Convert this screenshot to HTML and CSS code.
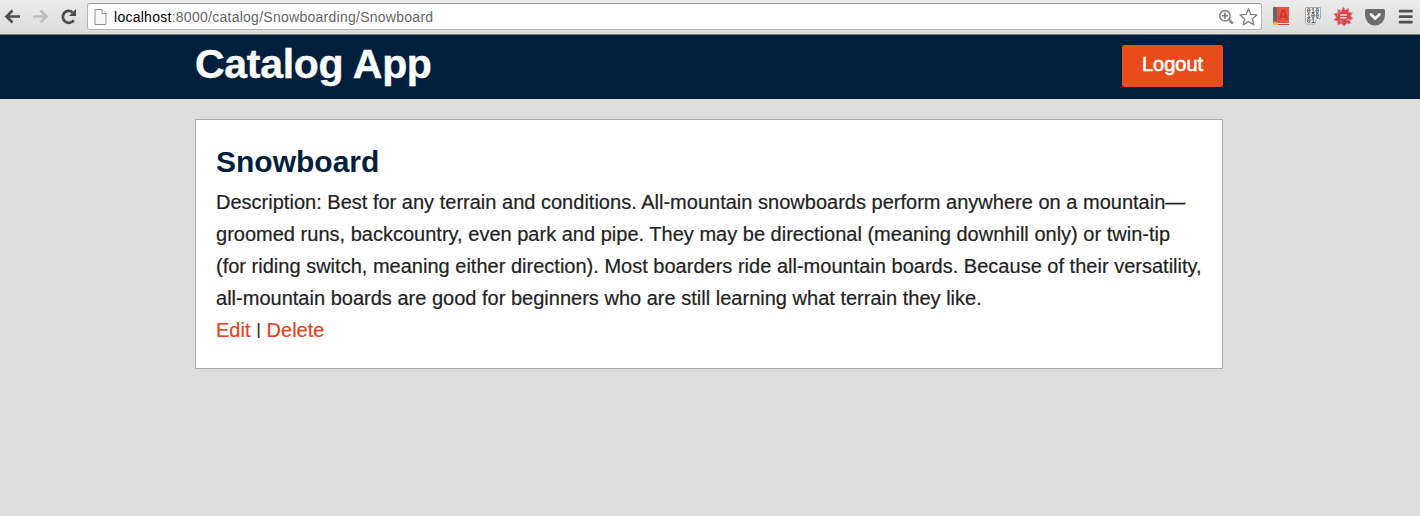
FILE: index.html
```html
<!DOCTYPE html>
<html lang="en">
<head>
<meta charset="utf-8">
<title>Catalog App</title>
<link rel="stylesheet" href="styles.css">
</head>
<body>
<div class="toolbar">
  <svg class="nav-icons" width="87" height="34" viewBox="0 0 87 34" fill="none">
    <path d="M20 16.500H7M12.500 10.500l-6 6 6 6" stroke="#4d4d4d" stroke-width="2.600"/>
    <path d="M33 16.500h13M40.500 10.500l6 6-6 6" stroke="#bdbdbd" stroke-width="2.600"/>
    <path d="M73.800 20.200A6 6 0 1 1 72.700 12.200" stroke="#4d4d4d" stroke-width="2.700"/>
    <path d="M76 9v7h-7z" fill="#4d4d4d"/>
  </svg>
  <div class="address">
    <svg class="page-icon" width="13" height="16" viewBox="0 0 13 16">
      <path d="M1 .5h7l4 4v11H1z" fill="#f8f8f8" stroke="#929292"/>
      <path d="M8 .5v4h4" fill="#fff" stroke="#929292"/>
    </svg>
    <span class="url"><span class="host">localhost</span>:8000/catalog/Snowboarding/Snowboard</span>
    <svg class="address-icons" width="42" height="24" viewBox="0 0 42 24" fill="none">
      <circle cx="9" cy="10.800" r="5.200" stroke="#858585" stroke-width="1.600"/>
      <path d="M6 10.800h6M9 7.800v6" stroke="#777" stroke-width="1.600"/>
      <path d="M12.800 14.600l4 4" stroke="#858585" stroke-width="2.400"/>
      <path d="M32.500 3.700l2.400 5.700 6 .5-4.600 4 1.500 6-5.300-3.300-5.300 3.300 1.500-6-4.600-4 6-.5z" stroke="#808080" stroke-width="1.300" stroke-linejoin="round"/>
    </svg>
  </div>
  <svg class="extensions" width="158" height="34" viewBox="0 0 158 34">
    <path d="M11 7h4v16h-4z" fill="#666"/>
    <path d="M15 7h12v16H15z" fill="#f05042"/>
    <path d="M15 23h12v1H15z" fill="#eee"/>
    <path d="M15 24h12v1H15z" fill="#d84333"/>
    <path d="M17.500 19.500l3-9h1.500l3 9M18.500 16.500h5.500" fill="none" stroke="#c9392e" stroke-width="1.800"/>
    <path d="M11.500 21.500l3 .5 2 3h-5z" fill="#f4b62d"/>
    <path d="M43.500 7.500h15v11l-5.500 5.500h-8q-1.500 0-1.500-1.500z" fill="#f6f6f6" stroke="#a5a8aa"/>
    <path d="M58.500 18.500h-4l-1.500 5.500" fill="#fff" stroke="#a5a8aa"/>
    <g class="bits"><text x="44.700" y="13.200">010</text><text x="44.700" y="18.300">100</text><text x="44.700" y="23.200">01</text></g>
    <path d="M81.500 7l1.700 3.200 3.600-1.800-.3 3.900 4 .2-2 3.500 2.500 2.500-3.500 1.300 1 3.900-4-.5-2.200 3-2.600-2.700-4 1.500.2-4-3.900-.8 2.500-2.900-2.500-3.500 4-.4-.3-4 3.800 1.300z" fill="#d9444a" stroke="#e4878a" stroke-width=".7"/>
    <path d="M80 10.500l-3 2M76 14.500l-1 2M77.500 20.500l3 1.500M87 19l-3 2" stroke="#f3a6a6" fill="none"/>
    <path d="M78.200 15h6.500M78.200 17.800h6.500" stroke="#ffe8e6" stroke-width="1.600"/>
    <path d="M104.500 9h17a1.500 1.500 0 0 1 1.500 1.500V15a9.500 10 0 0 1-20 0v-4.500Q103 9 104.500 9z" fill="#6d6d6d"/>
    <path d="M109 14.500l4.200 4 4.200-4" fill="none" stroke="#f4f4f4" stroke-width="2.800" stroke-linecap="round" stroke-linejoin="round"/>
    <path d="M138 11.200h11.500M138 16.700h11.500M138 22.200h11.500" stroke="#4f4f4f" stroke-width="2.700" stroke-linecap="round"/>
  </svg>
</div>
<header class="site-header">
  <div class="container">
    <h1 class="brand">Catalog App</h1>
    <a class="logout">Logout</a>
  </div>
</header>
<main class="card">
  <h2 class="item-title">Snowboard</h2>
  <p class="description">Description: Best for any terrain and conditions. All-mountain snowboards perform anywhere on a mountain—<br>groomed runs, backcountry, even park and pipe. They may be directional (meaning downhill only) or twin-tip<br>(for riding switch, meaning either direction). Most boarders ride all-mountain boards. Because of their versatility,<br>all-mountain boards are good for beginners who are still learning what terrain they like.</p>
  <div class="actions"><a class="link">Edit</a> <span class="divider">|</span> <a class="link">Delete</a></div>
</main>
</body>
</html>
```
FILE: styles.css
```css
* { box-sizing: border-box; }
body {
  margin: 0;
  min-height: 516px;
  background: #ddd;
  color: #222;
  font: 20px/32px "Liberation Sans", Arial, sans-serif;
  overflow: hidden;
}
.toolbar {
  display: flex;
  height: 35px;
  background: linear-gradient(#ebebeb, #dcdcdc);
  border-bottom: 1px solid #777;
}
.toolbar svg { display: block; flex: none; }
.address {
  display: flex;
  align-items: center;
  width: 1175px;
  height: 27px;
  margin-top: 3px;
  padding: 0 3px 0 6px;
  background: #fff;
  border: 1px solid #b5b5b5;
  border-top-color: #999;
  border-radius: 3px;
}
.url {
  flex: 1;
  margin-left: 7px;
  color: #666;
  font-size: 14px;
  letter-spacing: .265px;
  line-height: 24px;
}
.host { color: #000; }
.bits { fill: #555; font: bold 6.5px "Liberation Mono", monospace; letter-spacing: .4px; }
.site-header { height: 64px; background: #001f3d; }
.container {
  display: flex;
  justify-content: space-between;
  align-items: flex-start;
  width: 1028px;
  margin-left: 195px;
}
.brand {
  margin: 0;
  color: #fff;
  font-size: 41px;
  line-height: 59px;
  letter-spacing: -.3px;
  -webkit-text-stroke: .4px #fff;
}
.logout {
  width: 101px;
  height: 42px;
  margin-top: 10px;
  border-radius: 2px;
  background: #e84c1a;
  color: #fff;
  line-height: 39px;
  text-align: center;
  -webkit-text-stroke: .6px #fff;
}
.card {
  width: 1028px;
  height: 250px;
  margin: 20px 0 0 195px;
  padding: 20px;
  background: #fff;
  border: 1px solid #aaa;
}
.item-title { margin: 0 0 3px; color: #001f3d; font-size: 30px; line-height: 43px; }
.description { margin: 0; white-space: nowrap; letter-spacing: .01px; -webkit-text-stroke: .2px #222; }
.actions { -webkit-text-stroke: .2px; }
.link { color: #e8431f; }
.divider {
  display: inline-block;
  width: 5px;
  font-size: 16px;
  line-height: 20px;
  text-align: center;
  vertical-align: 2px;
}
```
